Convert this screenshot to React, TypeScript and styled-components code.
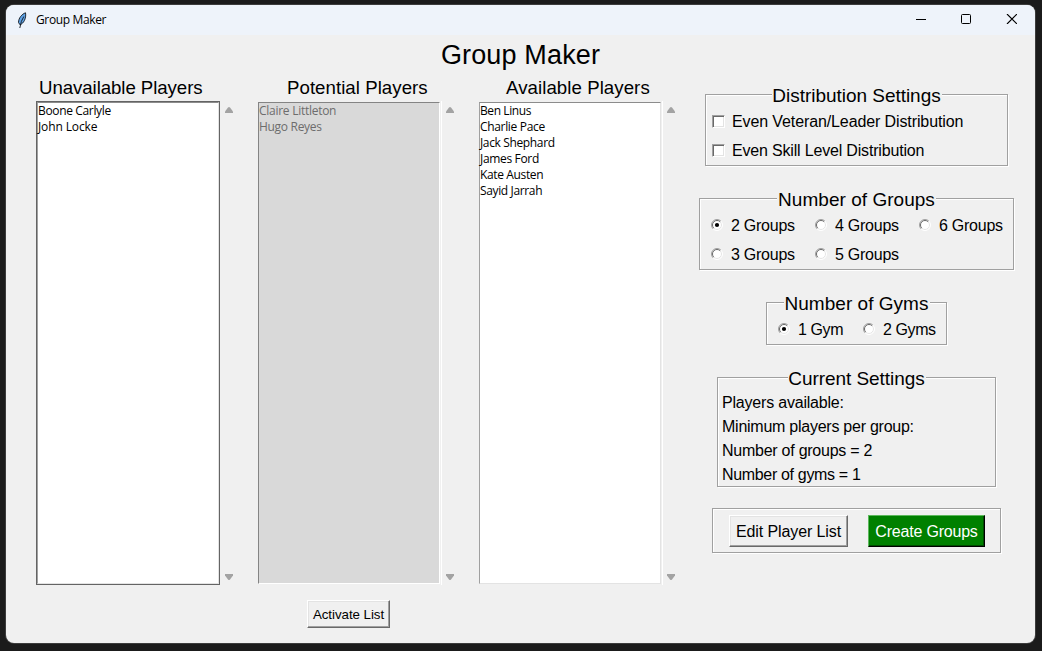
import React from "react";
import styled, { createGlobalStyle } from "styled-components";

const ui = '"Open Sans", "Noto Sans", sans-serif';
const arial = '"Liberation Sans", Arial, sans-serif';
const face = "#f0f0f0";

const GlobalStyle = createGlobalStyle`
  * { box-sizing: border-box; }
  html, body { margin: 0; height: 100%; overflow: hidden; }
  body { background: #1b1b1b; color: #000; font-family: ${arial}; font-kerning: none; }
  button { color: inherit; }
`;

const Desktop = styled.div`
  width: 1042px;
  height: 651px;
  padding: 5px 7px 8px 6px;
  background: #1b1b1b;
`;

const Window = styled.div`
  height: 638px;
  border-radius: 8px;
  overflow: hidden;
  background: ${face};
  box-shadow: 0 0 0 1px #3c3c3c;
`;

const TitleBar = styled.header`
  display: flex;
  align-items: center;
  height: 30px;
  padding: 0 18px 0 11px;
  background: #eef3fa;
  font: 12px/16px ${ui};
`;

const Caption = styled.span<{ $track: number }>`
  flex: 1;
  margin-left: 8px;
  letter-spacing: ${(p) => p.$track}px;
`;

const Controls = styled.div`
  display: flex;
  align-items: center;
  gap: 35px;
  margin-top: -2px;
`;

const Title = styled.h1`
  height: 40px;
  margin: 0;
  text-align: center;
  font: 27px/40px ${arial};
  letter-spacing: 0.15px;
`;

const Main = styled.main`
  display: flex;
  padding-left: 30px;
`;

const Column = styled.section`
  width: 221px;
`;

const Heading = styled.h2<{ $inset: number; $track: number }>`
  height: 26px;
  margin: 0;
  padding-left: ${(p) => p.$inset}px;
  font: 18.67px/25px ${arial};
  letter-spacing: ${(p) => p.$track}px;
  white-space: nowrap;
`;

const ListRow = styled.div`
  display: flex;
  height: 484px;
`;

const ListFrame = styled.div<{ $focused?: boolean }>`
  width: 184px;
  border: 1px solid ${(p) => (p.$focused ? "#646464" : face)};
`;

const ListBox = styled.ul<{ $disabled?: boolean }>`
  height: 482px;
  margin: 0;
  padding: 0;
  list-style: none;
  border: 1px solid;
  border-color: ${(p) =>
    p.$disabled ? "#848484 #fff #fff #848484" : "#8c8c8c #e3e3e3 #e3e3e3 #a0a0a0"};
  background: ${(p) => (p.$disabled ? "#d9d9d9" : "#fff")};
  color: ${(p) => (p.$disabled ? "#6d6d6d" : "#000")};
  font: 12px/15px ${ui};
`;

const Item = styled.li<{ $track: number }>`
  height: 16px;
  white-space: nowrap;
  letter-spacing: ${(p) => p.$track}px;
`;

const ScrollBar = styled.div<{ $line: boolean }>`
  display: flex;
  flex-direction: column;
  justify-content: space-between;
  width: 17px;
  padding: 6px 0 5px 4px;
  border-left: 1px solid ${(p) => (p.$line ? "#fff" : face)};
`;

const PushButton = styled.button<{ $tone?: "green"; $w: number; $h: number; $size: number; $track: number }>`
  width: ${(p) => p.$w}px;
  height: ${(p) => p.$h}px;
  padding: 2px 0 0;
  border: 1px solid;
  border-color: ${(p) => (p.$tone ? "#5cb85c #000 #000 #5cb85c" : "#fff #696969 #696969 #fff")};
  box-shadow: ${(p) =>
    p.$tone
      ? "inset -1px -1px 0 #004c00"
      : "inset -1px -1px 0 #a0a0a0, inset 1px 1px 0 #e3e3e3"};
  background: ${(p) => (p.$tone ? "#008000" : face)};
  color: ${(p) => (p.$tone ? "#fff" : "#000")};
  font: ${(p) => p.$size}px/18px ${arial};
  letter-spacing: ${(p) => p.$track}px;
  white-space: nowrap;
`;

const ListAction = styled.div`
  display: flex;
  padding: 15px 0 0 50px;
`;

const Settings = styled.aside`
  display: flex;
  flex-direction: column;
  align-items: center;
  width: 315px;
  margin-top: 19px;
`;

const Group = styled.section<{ $w: number; $h: number; $gap: number }>`
  display: flex;
  flex-direction: column;
  width: ${(p) => p.$w}px;
  height: ${(p) => p.$h}px;
  margin-bottom: ${(p) => p.$gap}px;
  border: 1px solid #a0a0a0;
  box-shadow: 1px 1px 0 #fff, inset 1px 1px 0 #fff;
`;

const Legend = styled.h3<{ $w: number; $track: number }>`
  align-self: center;
  flex: none;
  width: ${(p) => p.$w}px;
  height: 22px;
  margin: -10px 0 0;
  background: ${face};
  text-align: center;
  font: 19px/21px ${arial};
  letter-spacing: ${(p) => p.$track}px;
  white-space: nowrap;
`;

const Options = styled.div<{ $cols: string; $left: number }>`
  display: grid;
  grid-template-columns: ${(p) => p.$cols};
  grid-auto-rows: 29px;
  padding-left: ${(p) => p.$left}px;
`;

const Option = styled.label<{ $track: number; $gap: number }>`
  display: flex;
  align-items: center;
  gap: ${(p) => p.$gap}px;
  font: 16px/29px ${arial};
  letter-spacing: ${(p) => p.$track}px;
  white-space: nowrap;
`;

const CheckMark = styled.span`
  width: 13px;
  height: 13px;
  border: 1px solid;
  border-color: #a0a0a0 #fff #fff #a0a0a0;
  background: #fff;
  box-shadow: inset 1px 1px 0 #696969, inset -1px -1px 0 #e3e3e3;
`;

const RadioMark = styled.svg`
  flex: none;
  margin-top: -1px;
`;

const Summary = styled.div`
  padding: 1px 0 0 4px;
`;

const Line = styled.p<{ $track: number }>`
  margin: 0;
  font: 16px/24px ${arial};
  letter-spacing: ${(p) => p.$track}px;
`;

const Actions = styled.div`
  display: flex;
  gap: 20px;
  padding: 6px 0 0 16px;
`;

function Radio({ on }: { on?: boolean }) {
  return (
    <RadioMark width="12" height="12" viewBox="0 0 12 12">
      <circle cx="6" cy="6" r="5" fill="#fff" />
      <path d="M2.1 9.9A5.5 5.5 0 0 1 9.9 2.1" fill="none" stroke="#a0a0a0" />
      <path d="M2.8 9.2A4.5 4.5 0 0 1 9.2 2.8" fill="none" stroke="#696969" />
      <path d="M9.2 2.8A4.5 4.5 0 0 1 2.8 9.2" fill="none" stroke="#e3e3e3" />
      <path d="M9.9 2.1A5.5 5.5 0 0 1 2.1 9.9" fill="none" stroke="#fff" />
      {on && <circle cx="6" cy="6" r="2.1" fill="#000" />}
    </RadioMark>
  );
}

function Arrow({ down }: { down?: boolean }) {
  return (
    <svg width="8" height="6" viewBox="0 0 8 6">
      <path
        d={down ? "M0 0H8V1.5L5 5.5Q4 6.5 3 5.5L0 1.5Z" : "M0 6H8V4.5L5 .5Q4 -.5 3 .5L0 4.5Z"}
        fill="#a3a3a3"
      />
    </svg>
  );
}

function Feather() {
  return (
    <svg width="11" height="17" viewBox="0 0 11 17">
      <path d="M8.500 .8C5 2 1.500 6 1.500 10.500L3 12.800C6.500 11.500 9.500 6.500 8.500 .8Z" fill="#5fa3e6" stroke="#10151c" strokeWidth=".9" />
      <path d="M6.800 4.500Q4 8.500 2.800 16" fill="none" stroke="#10151c" strokeWidth=".9" />
    </svg>
  );
}

type Player = [string, number];
type ListData = {
  title: string;
  inset: number;
  track: number;
  focused?: boolean;
  disabled?: boolean;
  players: Player[];
};

const lists: ListData[] = [
  {
    title: "Unavailable Players",
    inset: 3,
    track: -0.07,
    focused: true,
    players: [["Boone Carlyle", -0.35], ["John Locke", -0.12]],
  },
  {
    title: "Potential Players",
    inset: 30,
    track: 0.04,
    disabled: true,
    players: [["Claire Littleton", -0.27], ["Hugo Reyes", -0.3]],
  },
  {
    title: "Available Players",
    inset: 28,
    track: 0.06,
    players: [
      ["Ben Linus", -0.4],
      ["Charlie Pace", -0.33],
      ["Jack Shephard", -0.36],
      ["James Ford", -0.33],
      ["Kate Austen", -0.36],
      ["Sayid Jarrah", -0.36],
    ],
  },
];

const groups = ["2 Groups", "4 Groups", "6 Groups", "3 Groups", "5 Groups"];

export default function App() {
  return (
    <Desktop>
      <GlobalStyle />
      <Window>
        <TitleBar>
          <Feather />
          <Caption $track={-0.36}>Group Maker</Caption>
          <Controls>
            <svg width="10" height="10" viewBox="0 0 10 10"><path d="M0 5.500H10" stroke="#000" /></svg>
            <svg width="10" height="10" viewBox="0 0 10 10"><rect x=".5" y=".5" width="9" height="9" rx="1" fill="none" stroke="#000" /></svg>
            <svg width="11" height="10" viewBox="0 0 11 10"><path d="M1 0L11 10M11 0L1 10" stroke="#000" strokeWidth="1.15" /></svg>
          </Controls>
        </TitleBar>
        <Title>Group Maker</Title>
        <Main>
          {lists.map((list) => (
            <Column key={list.title}>
              <Heading $inset={list.inset} $track={list.track}>{list.title}</Heading>
              <ListRow>
                <ListFrame $focused={list.focused}>
                  <ListBox $disabled={list.disabled}>
                    {list.players.map(([name, track]) => (
                      <Item key={name} $track={track}>{name}</Item>
                    ))}
                  </ListBox>
                </ListFrame>
                <ScrollBar $line={!list.focused}>
                  <Arrow />
                  <Arrow down />
                </ScrollBar>
              </ListRow>
              {list.disabled && (
                <ListAction>
                  <PushButton $w={83} $h={28} $size={13.33} $track={-0.05}>Activate List</PushButton>
                </ListAction>
              )}
            </Column>
          ))}
          <Settings>
            <Group $w={303} $h={72} $gap={32}>
              <Legend $w={170} $track={-0.03}>Distribution Settings</Legend>
              <Options $cols="1fr" $left={6}>
                <Option $track={-0.11} $gap={7}><CheckMark />Even Veteran/Leader Distribution</Option>
                <Option $track={-0.18} $gap={7}><CheckMark />Even Skill Level Distribution</Option>
              </Options>
            </Group>
            <Group $w={315} $h={72} $gap={32}>
              <Legend $w={159} $track={0.03}>Number of Groups</Legend>
              <Options $cols="104px 104px 1fr" $left={11}>
                {groups.map((label, i) => (
                  <Option key={label} $track={-0.25} $gap={8}><Radio on={i === 0} />{label}</Option>
                ))}
              </Options>
            </Group>
            <Group $w={181} $h={43} $gap={32}>
              <Legend $w={146} $track={0.03}>Number of Gyms</Legend>
              <Options $cols="85px 1fr" $left={11}>
                <Option $track={-0.4} $gap={8}><Radio on />1 Gym</Option>
                <Option $track={-0.4} $gap={8}><Radio />2 Gyms</Option>
              </Options>
            </Group>
            <Group $w={279} $h={110} $gap={21}>
              <Legend $w={138} $track={-0.05}>Current Settings</Legend>
              <Summary>
                <Line $track={-0.2}>Players available:</Line>
                <Line $track={-0.25}>Minimum players per group:</Line>
                <Line $track={-0.25}>Number of groups = 2</Line>
                <Line $track={-0.33}>Number of gyms = 1</Line>
              </Summary>
            </Group>
            <Group $w={289} $h={45} $gap={0}>
              <Actions>
                <PushButton $w={119} $h={32} $size={16} $track={-0.1}>Edit Player List</PushButton>
                <PushButton $w={117} $h={32} $size={16} $track={-0.2} $tone="green">Create Groups</PushButton>
              </Actions>
            </Group>
          </Settings>
        </Main>
      </Window>
    </Desktop>
  );
}
